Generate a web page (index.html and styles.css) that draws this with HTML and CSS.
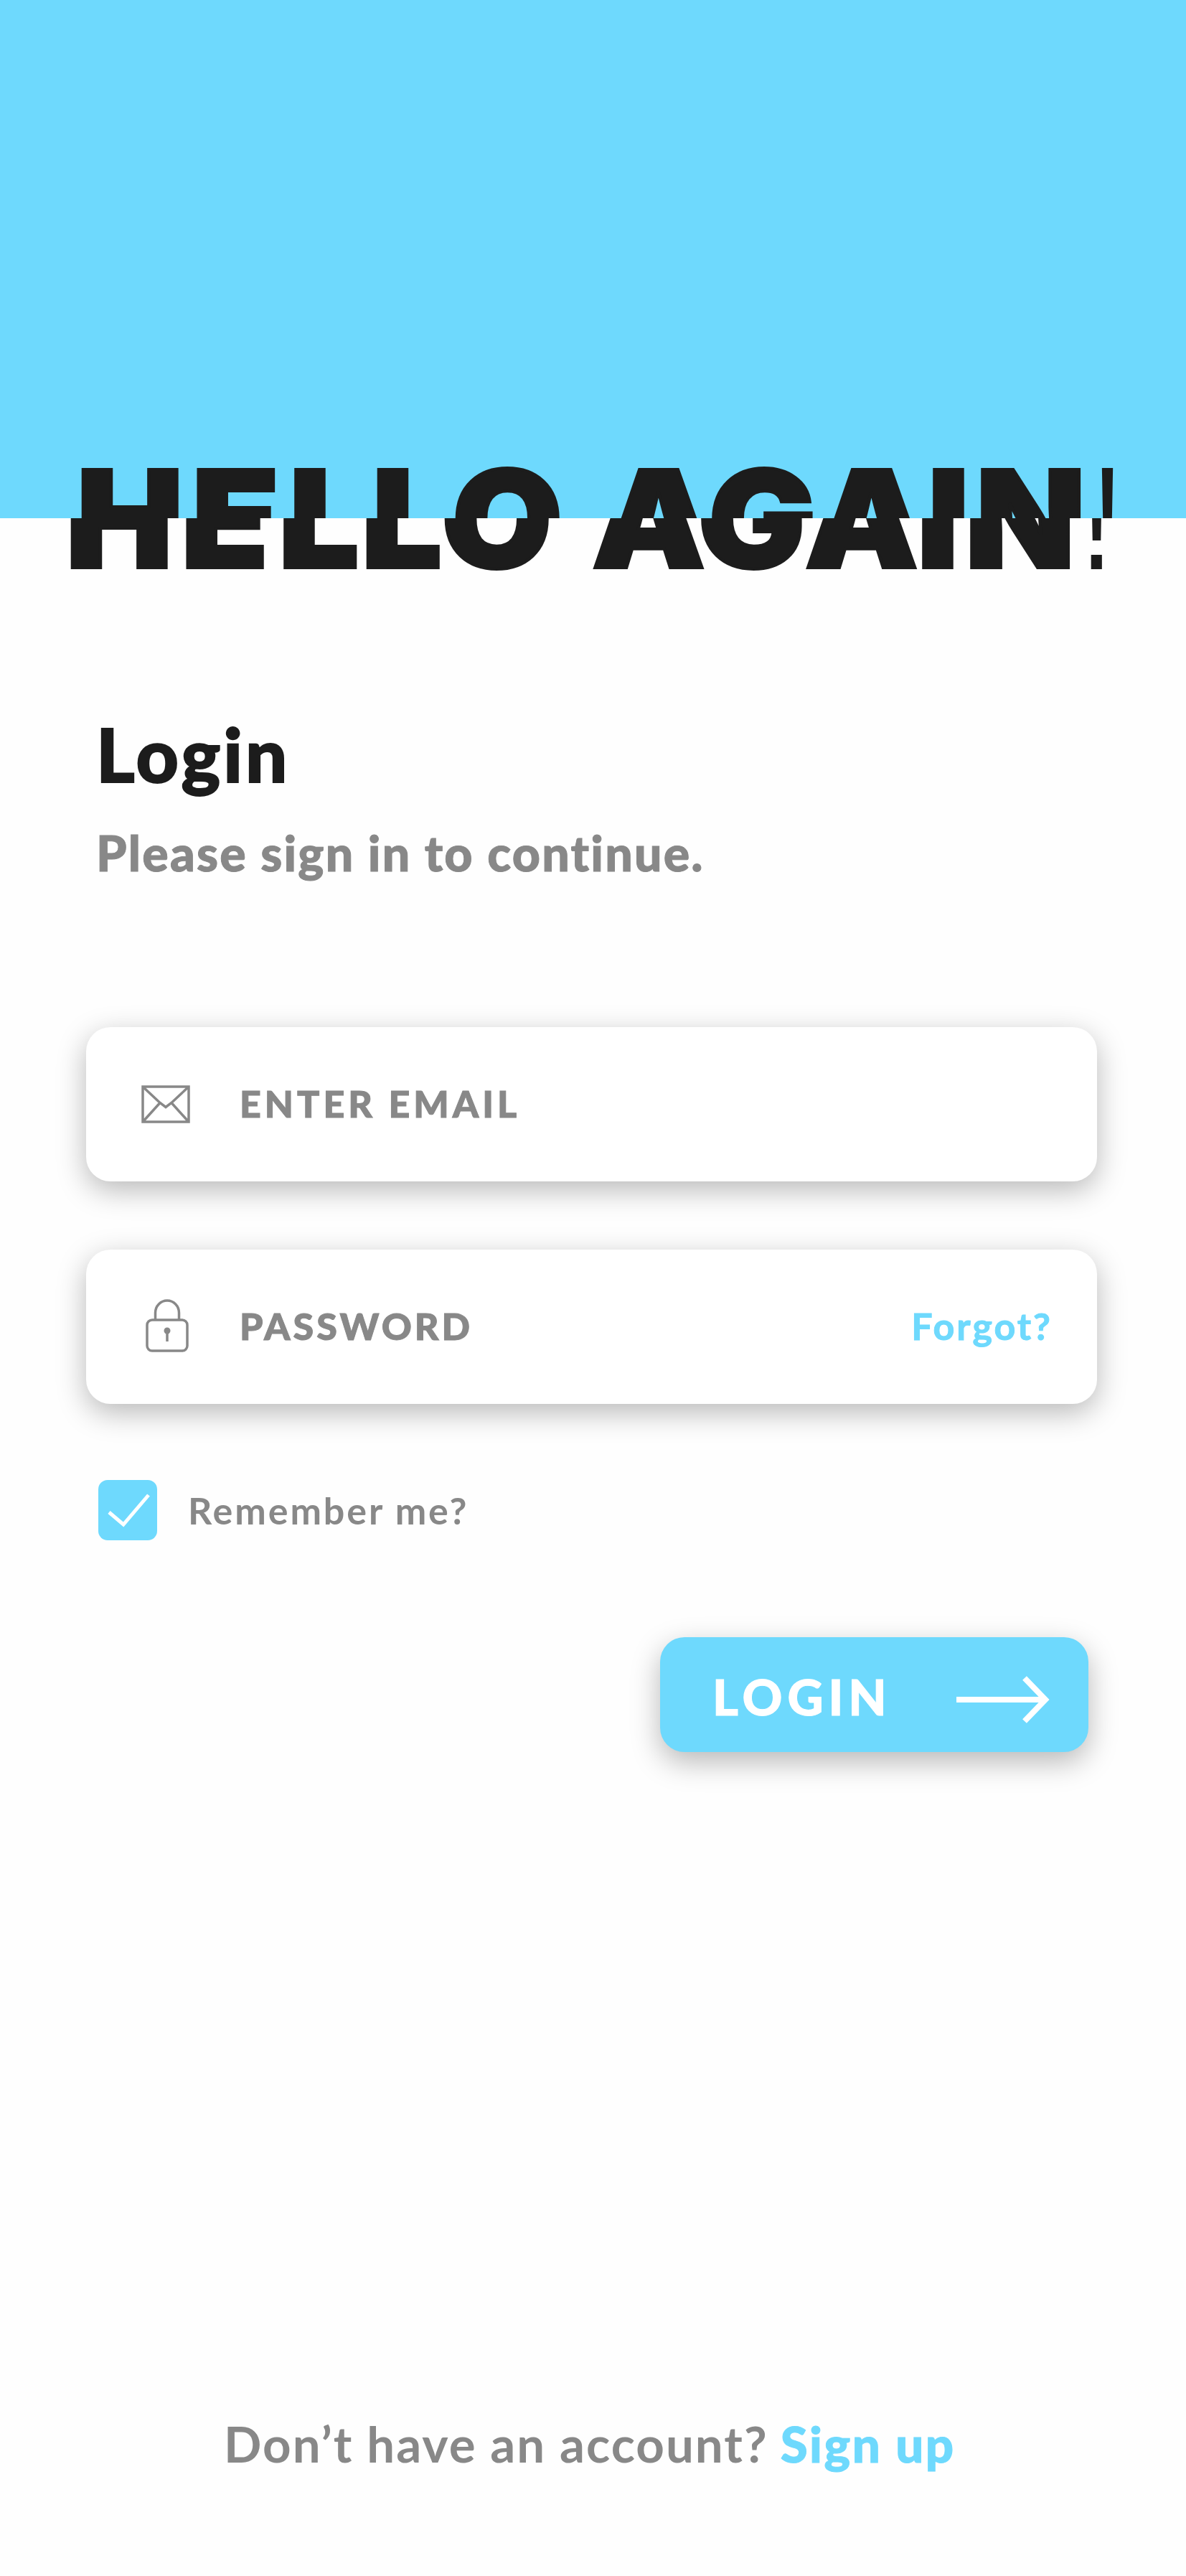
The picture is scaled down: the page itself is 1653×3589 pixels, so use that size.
FILE: index.html
```html
<!doctype html>
<html lang="en">
<head>
    <meta charset="UTF-8">
    <title>Login</title>
    <link rel="stylesheet" href="styles.css">
</head>
<body>

<div class="page">
    <div class="banner"></div>

    <!-- title is cut in two at the banner edge, upper half moved right -->
    <svg class="title" viewBox="0 0 1653 180">
        <defs>
            <clipPath id="upper"><rect x="0" y="0" width="1653" height="90"/></clipPath>
            <clipPath id="lower"><rect x="0" y="90" width="1653" height="90"/></clipPath>
            <g id="hello">
                <text transform="scale(1.06 1)" y="159" x="86.300 238 366 475 580.200 700 778 917.500 1058 1205.700 1269">HELLO AGAIN</text>
                <text class="mark" transform="scale(0.78 1)" x="1931" y="161">!</text>
            </g>
        </defs>
        <g clip-path="url(#upper)"><use href="#hello" x="15"/></g>
        <g clip-path="url(#lower)"><use href="#hello"/></g>
    </svg>

    <div class="header">
        <h2>Login</h2>
        <p>Please sign in to continue.</p>
    </div>

    <form class="form">
        <div class="field">
            <svg class="icon" viewBox="0 0 70 76">
                <path d="M3 14h64v49h-64zM3 14l24 22.500 8 6 8-6 24-22.500M3 63l24-26.500M67 63l-24-26.500"/>
            </svg>
            <span class="label">ENTER EMAIL</span>
        </div>
        <div class="field">
            <svg class="icon" viewBox="0 0 70 76">
                <rect x="9" y="29" width="56" height="43" rx="7"/>
                <path d="M20.500 29V19a16.500 17 0 0 1 33 0v10"/>
                <circle class="hole" cx="37" cy="44" r="4.500"/>
                <path d="M37 45v14"/>
            </svg>
            <span class="label password">PASSWORD</span>
            <a href="#" class="forgot">Forgot?</a>
        </div>
        <div class="remember">
            <span class="checkbox">
                <svg viewBox="0 0 82 84"><path d="M15 45l20 17 35-41"/></svg>
            </span>
            <span class="remember-text">Remember me?</span>
        </div>
        <button type="button" class="btn-login">
            <span>LOGIN</span>
            <svg viewBox="0 0 132 70"><path d="M2 35h124M97 5l29 30-29 30"/></svg>
        </button>
    </form>

    <div class="footer">
        <span class="ask">Don’t have an account?</span>
        <a href="#" class="signup">Sign up</a>
    </div>
</div>

</body>
</html>
```
FILE: styles.css
```css
* {
    margin: 0;
    padding: 0;
    box-sizing: border-box;
}
body {
    background: #fefefe;
    font-family: Lato, "Open Sans", sans-serif;
    color: #888;
}
a {
    color: #6ed9fd;
    text-decoration: none;
}
.page {
    display: flex;
    flex-direction: column;
    width: 1653px;
    height: 3589px;
}
.banner {
    height: 722px;
    background: #6ed9fd;
}
.title {
    display: block;
    width: 1653px;
    height: 180px;
    margin-top: -90px;
    fill: #1c1c1c;
    stroke: #1c1c1c;
    stroke-width: 4;
    font-family: Inter, sans-serif;
    font-size: 188px;
    font-weight: 900;
}
.title .mark {
    stroke: none;
    font-family: "Liberation Sans", sans-serif;
    font-size: 205px;
    font-weight: 400;
}
.header {
    padding: 178px 136px 0 134px;
}
.header h2 {
    font-size: 103px;
    line-height: 120px;
    font-weight: 900;
    letter-spacing: 4px;
    color: #1c1c1c;
    -webkit-text-stroke: 2px #1c1c1c;
}
.header p {
    margin-top: 38px;
    font-size: 68px;
    line-height: 80px;
    font-weight: 900;
    letter-spacing: 2.2px;
    -webkit-text-stroke: 1px #888;
}
.form {
    display: flex;
    flex-direction: column;
    padding: 203px 124px 0 120px;
}
.field {
    display: flex;
    align-items: center;
    height: 215px;
    margin-bottom: 95px;
    padding: 0 62px 4px 76px;
    border-radius: 34px;
    background: #fff;
    box-shadow: 0 12px 40px rgba(0,0,0,0.28);
}
.icon {
    width: 70px;
    height: 76px;
    margin-top: 2px;
    fill: none;
    stroke: #888;
    stroke-width: 3.5;
}
.icon .hole {
    fill: #888;
    stroke: none;
}
.label {
    margin-left: 68px;
    font-size: 52px;
    font-weight: 900;
    letter-spacing: 5px;
    -webkit-text-stroke: 1px #888;
}
.password {
    letter-spacing: 4px;
}
.forgot {
    margin-left: auto;
    font-size: 52px;
    font-weight: 700;
    letter-spacing: 3px;
    -webkit-text-stroke: 1px #6ed9fd;
}
.remember {
    display: flex;
    align-items: center;
    margin: 11px 0 0 17px;
}
.checkbox {
    width: 82px;
    height: 84px;
    border-radius: 13px;
    background: #6ed9fd;
}
.checkbox svg {
    display: block;
    fill: none;
    stroke: #fff;
    stroke-width: 5;
}
.remember-text {
    margin-left: 43px;
    font-size: 52px;
    font-weight: 700;
    letter-spacing: 2.9px;
}
.btn-login {
    display: flex;
    align-items: center;
    justify-content: space-between;
    align-self: flex-end;
    width: 597px;
    height: 160px;
    margin: 135px 12px 0 0;
    padding: 4px 54px 0 73px;
    border: 0;
    border-radius: 34px;
    background: #6ed9fd;
    box-shadow: 0 14px 40px rgba(0,0,0,0.28);
    color: #fff;
    font-family: Lato, "Open Sans", sans-serif;
    font-size: 69px;
    font-weight: 900;
    letter-spacing: 7px;
    -webkit-text-stroke: 1px #fff;
}
.btn-login svg {
    width: 132px;
    height: 70px;
    margin-top: 10px;
    fill: none;
    stroke: #fff;
    stroke-width: 8;
}
.footer {
    display: flex;
    margin-top: auto;
    padding: 0 0 144px 312px;
    font-size: 69px;
    line-height: 80px;
    font-weight: 700;
    letter-spacing: 2px;
}
.footer .signup {
    margin-left: 17px;
    font-weight: 900;
    letter-spacing: 2.5px;
    -webkit-text-stroke: 1px #6ed9fd;
}
```
